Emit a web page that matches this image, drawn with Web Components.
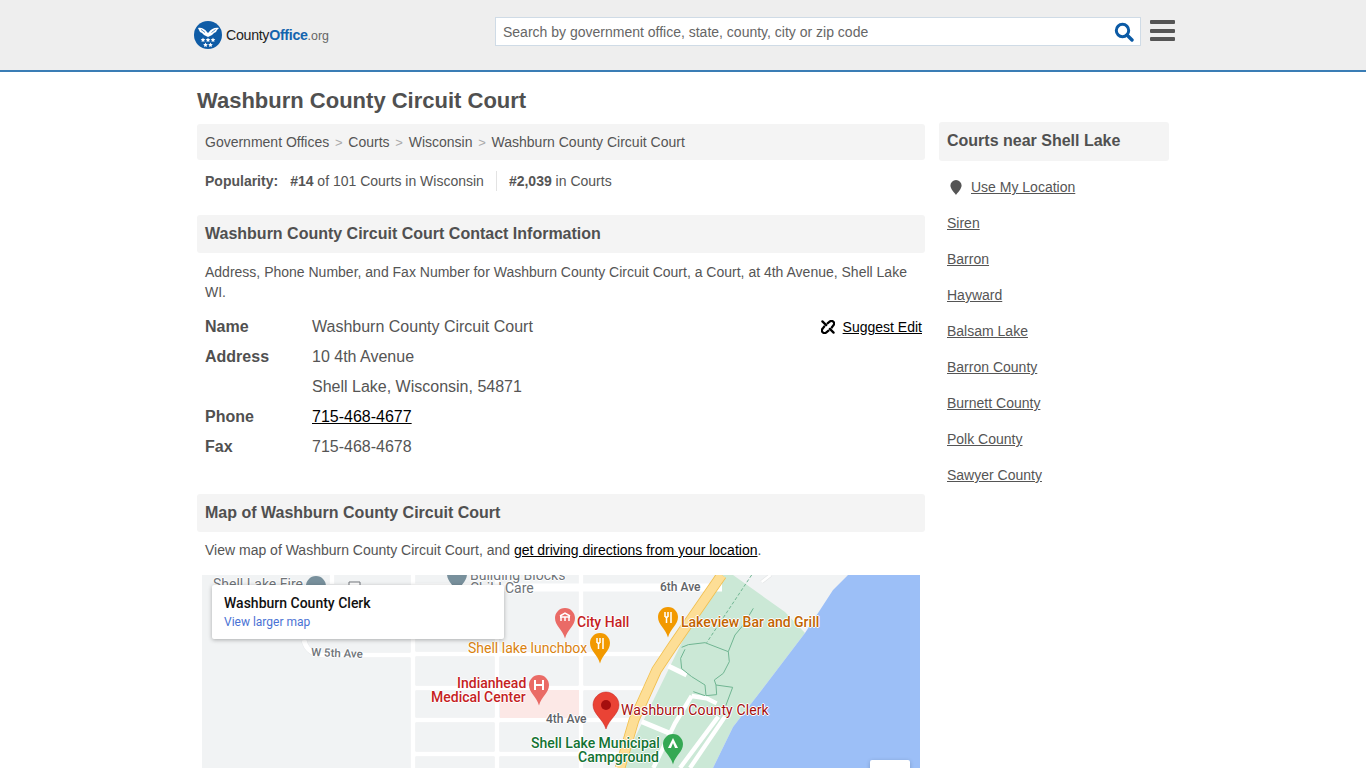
<!DOCTYPE html>
<html lang="en">
<head>
<meta charset="utf-8">
<title>Washburn County Circuit Court</title>
<style>
  html, body { margin: 0; height: 768px; overflow: hidden; background: #fff; }
  body { font-family: "Liberation Sans", Arial, sans-serif; color: #555; }
</style>
</head>
<body>

<site-header></site-header>

<page-layout>
  <h1 slot="title" style="margin:0;font-size:22px;line-height:28px;font-weight:700;color:#505050">Washburn County Circuit Court</h1>

  <bread-crumbs>
    <a>Government Offices</a>
    <a>Courts</a>
    <a>Wisconsin</a>
    <a>Washburn County Circuit Court</a>
  </bread-crumbs>

  <popularity-line></popularity-line>

  <section-bar>Washburn County Circuit Court Contact Information</section-bar>
  <text-note style="--note-top:9px;--note-bottom:9px">Address, Phone Number, and Fax Number for Washburn County Circuit Court, a Court, at 4th Avenue, Shell Lake WI.</text-note>

  <contact-table>
    <info-row label="Name">Washburn County Circuit Court<suggest-edit slot="aside"></suggest-edit></info-row>
    <info-row label="Address">10 4th Avenue</info-row>
    <info-row>Shell Lake, Wisconsin, 54871</info-row>
    <info-row label="Phone"><a style="color:#000;text-decoration:underline">715-468-4677</a></info-row>
    <info-row label="Fax">715-468-4678</info-row>
  </contact-table>

  <section-bar>Map of Washburn County Circuit Court</section-bar>
  <text-note style="--note-top:8px;--note-bottom:15px">View map of Washburn County Circuit Court, and <a style="color:#000;text-decoration:underline">get driving directions from your location</a>.</text-note>

  <map-embed></map-embed>

  <near-list slot="side" heading="Courts near Shell Lake">
    <a class="locate">Use My Location</a>
    <a>Siren</a>
    <a>Barron</a>
    <a>Hayward</a>
    <a>Balsam Lake</a>
    <a>Barron County</a>
    <a>Burnett County</a>
    <a>Polk County</a>
    <a>Sawyer County</a>
  </near-list>
</page-layout>

<script>
class SiteHeader extends HTMLElement {
  constructor() {
    super();
    this.attachShadow({ mode: 'open' });
  }

  connectedCallback() {
    this.shadowRoot.innerHTML = `
      <style>
        :host { display: block; height: 70px; background: #eee; border-bottom: 2px solid #3a7db5; }
        .inner { width: 972px; height: 70px; margin: 0 auto; display: flex; align-items: flex-start; }
        .logo { flex: none; display: flex; align-items: center; margin: 20px 0 0 -3px; width: 301px; height: 30px; }
        .logo svg { flex: none; }
        .word { margin-left: 4px; font-size: 14.2px; letter-spacing: -0.3px; color: #222; white-space: nowrap; }
        .word b { color: #1465ae; font-weight: 700; }
        .word i { font-style: normal; color: #666; font-size: 12.4px; letter-spacing: 0; }
        .search { flex: none; box-sizing: border-box; width: 646px; height: 29px; margin-top: 17px; background: #fff;
          border: 1px solid #cfdbe6; display: flex; align-items: center; justify-content: space-between;
          padding: 0 6px 0 7px; font-size: 14px; color: #666; }
        .menu { flex: none; display: flex; flex-direction: column; gap: 4.5px; margin: 20px 0 0 9px; }
        .menu span { display: block; width: 25px; height: 4px; border-radius: 1px; background: #555; }
      </style>
      <div class="inner">
        <div class="logo">
          <svg width="28" height="30" viewBox="194 20 28 30">
            <circle cx="208" cy="35" r="14" fill="#0f5ca6"/>
            <path d="M198 28 C201 27 205 29 207 32 L208 33 L209 32 C211 29 215 27 219 28 L217 30 L216 32 L214 33 L212 35 L208 37 L204 35 L202 33 L200 32 L199 30 Z" fill="#fff"/>
            <path d="M201 29.5 L205 32.5 M215.5 29.5 L211.5 32.5" stroke="#0f5ca6" stroke-width=".7"/>
            <g fill="#fff">
              <polygon points="203,37.6 203.7,39.1 205.3,39.3 204.1,40.4 204.4,42 203,41.2 201.6,42 201.9,40.4 200.7,39.3 202.3,39.1"/>
              <polygon transform="translate(5 0)" points="203,37.6 203.7,39.1 205.3,39.3 204.1,40.4 204.4,42 203,41.2 201.6,42 201.9,40.4 200.7,39.3 202.3,39.1"/>
              <polygon transform="translate(10 0)" points="203,37.6 203.7,39.1 205.3,39.3 204.1,40.4 204.4,42 203,41.2 201.6,42 201.9,40.4 200.7,39.3 202.3,39.1"/>
              <polygon transform="translate(2.5 5)" points="203,37.6 203.7,39.1 205.3,39.3 204.1,40.4 204.4,42 203,41.2 201.6,42 201.9,40.4 200.7,39.3 202.3,39.1"/>
              <polygon transform="translate(7.5 5)" points="203,37.6 203.7,39.1 205.3,39.3 204.1,40.4 204.4,42 203,41.2 201.6,42 201.9,40.4 200.7,39.3 202.3,39.1"/>
            </g>
          </svg>
          <span class="word">County<b>Office</b><i>.org</i></span>
        </div>
        <div class="search">
          <span>Search by government office, state, county, city or zip code</span>
          <svg width="20" height="20" viewBox="0 0 20 20">
            <circle cx="8.5" cy="8.5" r="6.2" fill="none" stroke="#0b5aa5" stroke-width="3"/>
            <path d="M13 13 L18 18" stroke="#0b5aa5" stroke-width="3.4" stroke-linecap="round"/>
          </svg>
        </div>
        <div class="menu"><span></span><span></span><span></span></div>
      </div>
    `;
  }
}

class PageLayout extends HTMLElement {
  constructor() {
    super();
    this.attachShadow({ mode: 'open' });
  }

  connectedCallback() {
    this.shadowRoot.innerHTML = `
      <style>
        :host { display: block; width: 972px; margin: 0 auto; }
        .title { padding-top: 15px; height: 35px; }
        .cols { display: grid; grid-template-columns: 728px 230px; column-gap: 14px; margin-top: 2px; }
        .side { margin-top: -2px; }
      </style>
      <div class="title"><slot name="title"></slot></div>
      <div class="cols">
        <div class="main"><slot></slot></div>
        <div class="side"><slot name="side"></slot></div>
      </div>
    `;
  }
}

class BreadCrumbs extends HTMLElement {
  constructor() {
    super();
    this.attachShadow({ mode: 'open' });
  }

  connectedCallback() {
    this.shadowRoot.innerHTML = `
      <style>
        :host { display: flex; align-items: center; height: 36px; padding: 0 8px; background: #f4f4f4; border-radius: 3px; font-size: 14px; color: #555; }
        ::slotted(a) { display: inline-flex; align-items: center; }
        ::slotted(a:not(:last-child))::after { content: ">"; margin: 0 5.75px; color: #aaa; font-size: 13px; }
        slot { display: flex; }
      </style>
      <slot></slot>
    `;
  }
}

class PopularityLine extends HTMLElement {
  constructor() {
    super();
    this.attachShadow({ mode: 'open' });
  }

  connectedCallback() {
    this.shadowRoot.innerHTML = `
      <style>
        :host { display: flex; align-items: center; height: 20px; margin: 11px 0 24px; padding: 0 8px; font-size: 14px; color: #555; }
        b { color: #555; }
        .label { margin-right: 12px; }
        .first { padding-right: 12px; border-right: 1px solid #e3e3e3; margin-right: 12px; line-height: 20px; }
      </style>
      <b class="label">Popularity:</b>
      <span class="first"><b>#14</b> of 101 Courts in Wisconsin</span>
      <span><b>#2,039</b> in Courts</span>
    `;
  }
}

class SectionBar extends HTMLElement {
  constructor() {
    super();
    this.attachShadow({ mode: 'open' });
  }

  connectedCallback() {
    this.shadowRoot.innerHTML = `
      <style>
        :host { display: flex; align-items: center; height: 38px; padding: 0 8px; background: #f4f4f4; border-radius: 3px;
          font-size: 16px; font-weight: 700; color: #505050; }
      </style>
      <slot></slot>
    `;
  }
}

class TextNote extends HTMLElement {
  constructor() {
    super();
    this.attachShadow({ mode: 'open' });
  }

  connectedCallback() {
    this.shadowRoot.innerHTML = `
      <style>
        :host { display: block; padding: var(--note-top, 8px) 8px var(--note-bottom, 8px); font-size: 14px; line-height: 20px; color: #555; }
      </style>
      <slot></slot>
    `;
  }
}

class ContactTable extends HTMLElement {
  constructor() {
    super();
    this.attachShadow({ mode: 'open' });
  }

  connectedCallback() {
    this.shadowRoot.innerHTML = `
      <style>
        :host { display: block; margin: 1px 0 32px; padding: 0 3px 0 8px; }
      </style>
      <slot></slot>
    `;
  }
}

class InfoRow extends HTMLElement {
  constructor() {
    super();
    this.attachShadow({ mode: 'open' });
  }

  connectedCallback() {
    const label = this.getAttribute('label') || '';
    this.shadowRoot.innerHTML = `
      <style>
        :host { display: grid; grid-template-columns: 107px 1fr auto; align-items: center; height: 30px; font-size: 16px; color: #555; }
        b { color: #505050; }
      </style>
      <b>${label}</b>
      <span><slot></slot></span>
      <slot name="aside"></slot>
    `;
  }
}

class SuggestEdit extends HTMLElement {
  constructor() {
    super();
    this.attachShadow({ mode: 'open' });
  }

  connectedCallback() {
    this.shadowRoot.innerHTML = `
      <style>
        :host { display: flex; align-items: center; gap: 8px; font-size: 14px; color: #000; }
        a { text-decoration: underline; }
        svg { display: block; }
      </style>
      <svg width="14" height="14" viewBox="0 0 15 15">
        <g fill="none" stroke="#000" stroke-width="2.4" stroke-linecap="round">
          <path d="M1.5 1.5 L5.5 5.5 M9.5 9.5 L13.5 13.5"/>
          <path d="M7 3.5 L9.2 1.8 A2.7 2.7 0 0 1 13.2 5.8 L11.5 8"/>
          <path d="M8 11.5 L5.8 13.2 A2.7 2.7 0 0 1 1.8 9.2 L3.5 7"/>
        </g>
      </svg>
      <a>Suggest Edit</a>
    `;
  }
}

class NearList extends HTMLElement {
  constructor() {
    super();
    this.attachShadow({ mode: 'open' });
  }

  connectedCallback() {
    const heading = this.getAttribute('heading') || '';
    this.shadowRoot.innerHTML = `
      <style>
        :host { display: block; font-size: 14px; color: #555; }
        h3 { margin: 0 0 8px; height: 39px; box-sizing: border-box; padding: 0 8px 2px; display: flex; align-items: center;
          background: #f4f4f4; border-radius: 3px; font-size: 16px; font-weight: 700; color: #505050; }
        ul { list-style: none; margin: 0; padding: 0 8px; }
        ::slotted(a) { display: flex; align-items: center; height: 36px; text-decoration: underline; color: #555; }
        ::slotted(a.locate) { padding-left: 24px;
          background: no-repeat 3px 50%/12px 15px url("data:image/svg+xml,%3Csvg xmlns='http://www.w3.org/2000/svg' viewBox='0 0 12 15'%3E%3Cpath fill='%23555' d='M6 0a5.6 5.6 0 0 1 5.6 5.6C11.6 9 7.5 13 6 15 4.500 13 .4 9 .4 5.600A5.6 5.6 0 0 1 6 0z'/%3E%3C/svg%3E"); }
      </style>
      <h3>${heading}</h3>
      <ul><slot></slot></ul>
    `;
  }
}

class MapEmbed extends HTMLElement {
  constructor() {
    super();
    this.attachShadow({ mode: 'open' });
  }

  connectedCallback() {
    // labels are [text, left, top (page px), colour, extra css]
    const labels = [
      ['Shell Lake Fire', 213, 576, '#70757a', ''],
      ['Building Blocks', 470, 567, '#70757a', ''],
      ['Child Care', 470, 580, '#70757a', ''],
      ['6th Ave', 660, 579, '#5f6368', 'font-size:12px;font-weight:500'],
      ['W 5th Ave', 311, 645, '#70757a', 'font-size:11.5px;font-weight:500;transform:rotate(2deg)'],
      ['4th Ave', 546, 711, '#5f6368', 'font-size:12px;font-weight:500'],
      ['City Hall', 577, 614, '#c5221f', 'font-weight:500'],
      ['Lakeview Bar and Grill', 681, 614, '#c26401', 'font-weight:500'],
      ['Shell lake lunchbox', 468, 640, '#d9820f', ''],
      ['Indianhead', 457, 675, '#c5221f', 'font-weight:500'],
      ['Medical Center', 431, 689, '#c5221f', 'font-weight:500'],
      ['Washburn County Clerk', 621, 702, '#a50e0e', 'letter-spacing:.12px'],
      ['Shell Lake Municipal', 531, 735, '#137333', 'font-weight:500'],
      ['Campground', 578, 749, '#137333', 'font-weight:500']
    ];
    const labelHtml = labels.map(([t, x, y, c, extra]) =>
      `<span class="label" style="left:${x - 202}px;top:${y - 575}px;color:${c};${extra}">${t}</span>`).join('');

    const roads = `
      <path d="M413 575 V768 M497 575 V768 M581 575 V768 M332 575 V584"/>
      <path d="M304 640 C306 650 314 655 324 655 L413 655 M413 654 H662"/>
      <path d="M413 688 H646 M413 720 H630 M413 754 H620"/>`;

    this.shadowRoot.innerHTML = `
      <style>
        :host { display: block; position: relative; width: 718px; height: 193px; margin-left: 5px; overflow: hidden; background: #f1f3f4; font-family: Roboto, sans-serif; }
        svg { position: absolute; left: 0; top: 0; }
        .label { position: absolute; font-size: 14px; line-height: 16px; white-space: nowrap;
          text-shadow: -1px 0 #fff, 1px 0 #fff, 0 -1px #fff, 0 1px #fff; }
        .card { position: absolute; left: 10px; top: 10px; box-sizing: border-box; width: 292px; height: 54px; padding: 10px 12px; background: #fff;
          box-shadow: 0 1px 4px rgba(0,0,0,.3); border-radius: 2px; }
        .card b { display: block; font-size: 14px; line-height: 16px; font-weight: 500; color: #111; }
        .card a { display: block; margin-top: 4px; font-size: 12px; line-height: 15px; color: #4a72d4; }
        .zoom { position: absolute; left: 668px; top: 185px; width: 40px; height: 40px; background: #fff; border-radius: 2px; box-shadow: 0 1px 4px rgba(0,0,0,.2); }
      </style>
      <svg width="718" height="193" viewBox="202 575 718 193">
        <rect x="202" y="575" width="718" height="193" fill="#f1f3f4"/>
        <path d="M733 575 L785 612 L805 633 L767 683 L733 727 L713 768 L620 768 L715 575 Z" fill="#cbe8d6"/>
        <path d="M848 575 L920 575 L920 768 L713 768 L733 727 L767 683 L805 633 L820 610 L833 590 Z" fill="#9cbff7"/>
        <g stroke="#e6e8ea" stroke-width="6" fill="none">${roads}</g>
        <g stroke="#fff" stroke-width="5" fill="none">${roads}</g>
        <path d="M413 587.5 H722" stroke="#fff" stroke-width="8" fill="none"/>
        <rect x="500" y="690" width="79" height="28" fill="#fce8e6"/>
        <g transform="translate(560 570) scale(.3333)">
          <path d="M325 288 L380 315 M245 455 L330 490" stroke="#fff" stroke-width="15" fill="none"/>
          <path d="M395 378 L345 460 L280 594 M395 378 L440 385 L470 400 M475 440 L360 594 M495 440 L390 594" stroke="#fff" stroke-width="13" fill="none"/>
          <path d="M365 232 L385 224 L435 218 L505 245 L508 275 L490 310 L463 330 L468 345 L518 352 L497 408 M468 345 L470 374 L438 377 L435 345 L395 320 L365 296 L362 265 L375 238 M505 245 L525 195 L550 165 L580 115 M435 377 L400 365" stroke="#6fb592" stroke-width="3" fill="none"/>
          <path d="M575 15 L440 218" stroke="#6fb592" stroke-width="3" stroke-dasharray="10 6" fill="none"/>
          <path d="M605 36 L632 15" stroke="#e3e5e6" stroke-width="12" fill="none"/>
          <path d="M605 36 L632 15" stroke="#fff" stroke-width="8" fill="none"/>
          <path d="M485 15 L340 225 L290 300 L222 450 L180 594" stroke="#f2c04f" stroke-width="32" fill="none"/>
          <path d="M485 15 L340 225 L290 300 L222 450 L180 594" stroke="#fdde96" stroke-width="27" fill="none"/>
        </g>
        <path d="M349 582 h11 v12 h-11 z" fill="#fff" stroke="#70757a"/>
        ${MapEmbed.pin(316, 586, 10, '#78909c')}
        ${MapEmbed.pin(457, 574, 10, '#78909c')}
        ${MapEmbed.pin(565, 618, 10, '#ea6b66')}
        <path d="M560 617 h10 M561 621 v-4 M565 621 v-4 M569 621 v-4 M560 616 L565 613 L570 616" stroke="#fff" stroke-width="1.5" fill="none"/>
        ${MapEmbed.pin(668, 617, 10, '#f29900')}
        <path d="M665 612 v5 M668 612 v5 M665 617 H668 M666.5 617 v6 M671 612 v11" stroke="#fff" stroke-width="1.5" fill="none"/>
        ${MapEmbed.pin(600, 643, 10, '#f29900')}
        <path d="M597 638 v5 M600 638 v5 M597 643 H600 M598.5 643 v6 M603 638 v11" stroke="#fff" stroke-width="1.5" fill="none"/>
        ${MapEmbed.pin(539, 685, 10, '#ea6b66')}
        <path d="M535 680 v10 M543 680 v10 M535 685 h8" stroke="#fff" stroke-width="2" fill="none"/>
        ${MapEmbed.pin(673, 744, 10, '#34a853')}
        <path d="M673 738 L678 748 H668 Z" fill="#fff"/><path d="M673 743 L675 748 H671 Z" fill="#34a853"/>
        <path d="M606 692 C599 692 593 698 593 705 C593 714 603 719 606 729 C609 719 619 714 619 705 C619 698 613 692 606 692 Z" fill="#ea4335" stroke="#c5221f" stroke-width=".5"/>
        <circle cx="606" cy="705" r="5" fill="#a50e0e"/>
      </svg>
      ${labelHtml}
      <div class="card"><b>Washburn County Clerk</b><a>View larger map</a></div>
      <div class="zoom"></div>
    `;
  }

  static pin(cx, cy, r, fill) {
    const tip = cy + r * 2.05;
    return `<path d="M${cx} ${cy - r} C${cx - r * .6} ${cy - r} ${cx - r} ${cy - r * .5} ${cx - r} ${cy} C${cx - r} ${cy + r * .8} ${cx - r * .25} ${cy + r * 1.1} ${cx} ${tip} C${cx + r * .25} ${cy + r * 1.1} ${cx + r} ${cy + r * .8} ${cx + r} ${cy} C${cx + r} ${cy - r * .5} ${cx + r * .6} ${cy - r} ${cx} ${cy - r} Z" fill="${fill}"/>`;
  }
}

customElements.define('site-header', SiteHeader);
customElements.define('page-layout', PageLayout);
customElements.define('bread-crumbs', BreadCrumbs);
customElements.define('popularity-line', PopularityLine);
customElements.define('section-bar', SectionBar);
customElements.define('text-note', TextNote);
customElements.define('contact-table', ContactTable);
customElements.define('info-row', InfoRow);
customElements.define('suggest-edit', SuggestEdit);
customElements.define('near-list', NearList);
customElements.define('map-embed', MapEmbed);
</script>
</body>
</html>
